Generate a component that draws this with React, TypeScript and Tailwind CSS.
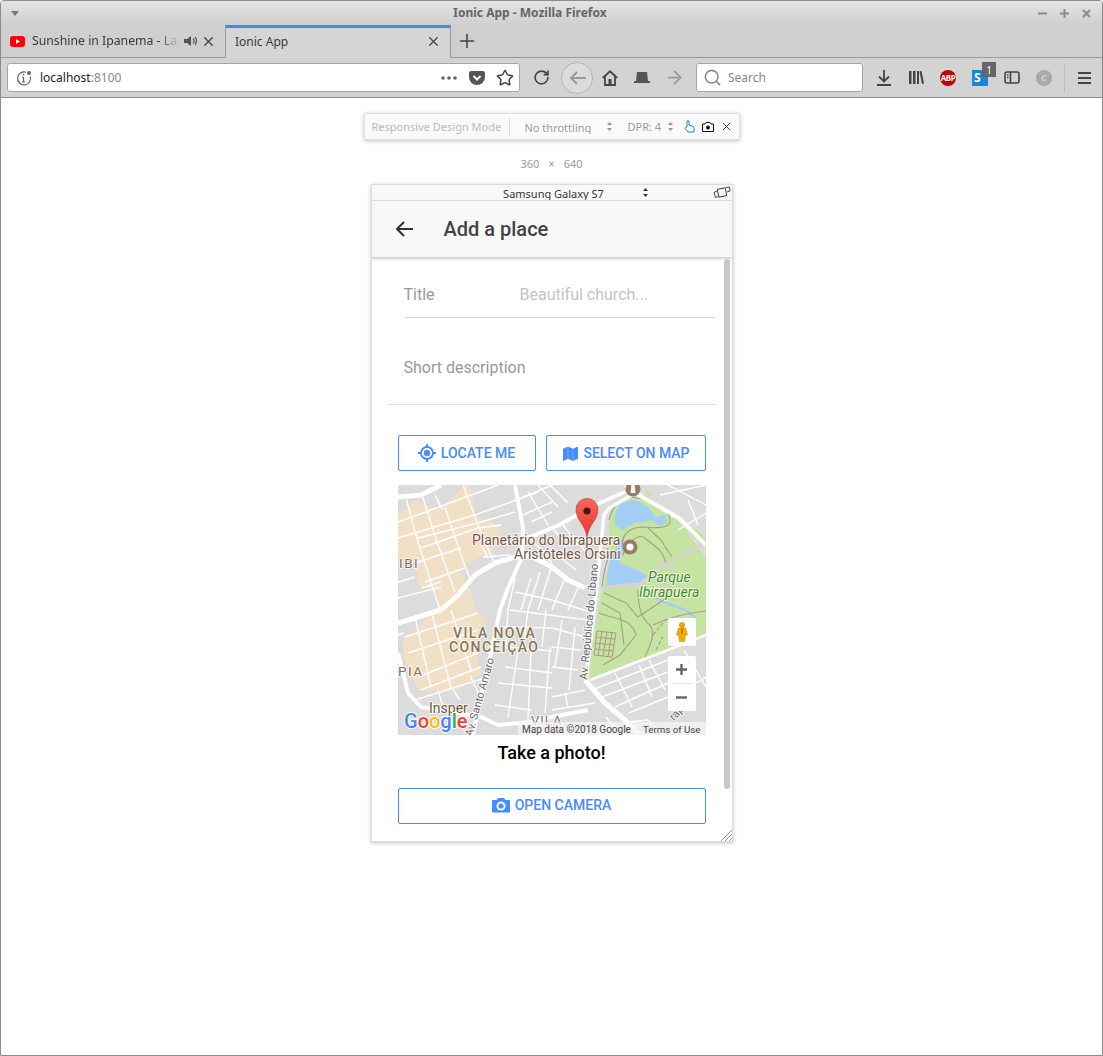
import { ArrowRight, Plus, RotateCw, Search, Star, X } from "lucide-react";

// main roads: points, width
const roads: [string, number][] = [
  ["M0 12 L23 10 L43 0", 5],
  ["M0 138 L33 128 L43 125 L60 110 L77 90 L97 78 L117 72 L135 72 L154 82 L170 95 L187 103", 5],
  ["M117 0 L125 43 L124 72 L110 103 L102 125 L93 168 L80 225 L75 250", 4],
  ["M0 168 L10 208 L23 222 L43 225 L83 232 L100 240 L133 237 L154 232 L190 225", 4],
  ["M187 195 L207 218 L227 235 L241 250", 5],
  ["M234 10 L211 23 L206 30 L199 100 L188 195", 3.5],
  ["M125 55 L161 40 L197 20 L227 7", 4],
  ["M227 0 L244 12 L281 33 L308 60", 4],
  ["M192 195 L270 165 L308 150", 2.5],
];

const grid: [number, number, number, number][] = [
  [8, 13, 20, 57], [20, 57, 42, 125], [25, 13, 40, 60], [40, 60, 57, 107], [47, 23, 63, 70], [63, 70, 73, 97], [65, 0, 80, 40], [80, 40, 97, 80],
  [37, 10, 44, 24], [0, 37, 33, 25], [33, 25, 100, 0], [0, 53, 77, 30], [77, 30, 140, 7], [20, 53, 83, 37], [83, 37, 117, 27], [23, 63, 80, 43], [80, 43, 103, 40],
  [17, 78, 63, 63], [27, 97, 67, 83], [0, 97, 17, 92], [23, 103, 43, 97], [0, 113, 43, 102], [85, 72, 112, 70], [83, 60, 90, 72],
  [123, 13, 154, 0], [125, 30, 154, 17], [133, 37, 154, 27], [130, 7, 150, 40], [140, 0, 160, 22], [152, 0, 170, 18],
  [103, 142, 154, 143], [154, 143, 187, 152], [107, 182, 154, 188], [154, 182, 180, 185], [108, 162, 154, 166], [154, 162, 183, 165], [100, 198, 154, 203], [97, 220, 133, 225], [117, 107, 154, 115], [154, 115, 195, 128], [112, 125, 190, 135],
  [120, 165, 113, 212], [113, 212, 110, 232], [133, 165, 130, 235], [152, 162, 147, 228], [164, 135, 157, 182], [177, 142, 171, 205], [117, 93, 110, 125], [133, 93, 123, 125], [142, 87, 130, 125], [154, 80, 140, 125], [167, 93, 154, 125], [180, 103, 170, 125], [110, 125, 108, 160], [130, 125, 125, 165], [148, 125, 144, 162],
  [7, 152, 80, 128], [10, 168, 80, 145], [20, 192, 80, 168], [23, 205, 83, 182], [17, 132, 33, 202], [33, 125, 53, 203], [53, 125, 73, 185], [20, 214, 84, 194], [55, 205, 62, 215], [72, 190, 82, 212],
  [0, 183, 8, 182], [0, 150, 6, 148], [40, 205, 45, 222],
  [194, 205, 270, 175], [204, 212, 270, 187], [217, 222, 270, 198], [231, 228, 270, 212], [298, 198, 308, 192], [217, 188, 234, 222], [241, 180, 254, 212], [251, 175, 267, 205], [286, 165, 308, 202],
  [154, 212, 187, 205], [167, 208, 170, 222], [154, 225, 197, 218], [230, 237, 250, 235], [250, 235, 265, 250], [208, 232, 222, 250], [280, 45, 308, 28], [262, 10, 308, 0], [270, 0, 308, 20], [290, 15, 300, 40],
  [165, 40, 180, 60], [154, 43, 167, 57], [175, 50, 190, 70], [154, 66, 178, 85], [130, 50, 154, 78],
];

const parkPaths = [
  "M211 35 C214 20 225 10 240 13 C258 16 270 24 272 34 C274 42 262 44 246 42 C232 42 225 48 224 60",
  "M225 70 C228 60 240 46 248 54 C258 62 266 66 268 80",
  "M250 42 C254 50 262 50 266 60 L274 72",
  "M201 128 C218 135 232 132 238 150 L222 170 L205 180",
  "M240 105 C240 125 245 135 252 140 C258 150 252 160 247 172",
  "M206 108 L228 118 L240 132 L258 120 L270 112",
  "M255 140 C272 132 290 128 308 126",
  "M255 150 L268 134 M270 150 L295 142 M258 165 L265 152 M278 145 L290 160",
  "M211 70 C206 84 205 92 204 102",
  "M204 118 L222 128 L226 160",
];

function SortArrows({ className }: { className?: string }) {
  return (
    <svg width="5" height="9" viewBox="0 0 5 9" fill="currentColor" className={className}>
      <path d="M2.5 0L5 3H0ZM0 6H5L2.5 9Z" />
    </svg>
  );
}

function MapCanvas() {
  const font = { fontFamily: "Roboto, sans-serif", paintOrder: "stroke" } as const;
  return (
    <svg viewBox="0 0 308 250" className="block h-[250px] w-[308px]">
      <defs>
        <linearGradient id="pin" x1="0" y1="0" x2="0" y2="1">
          <stop offset="0" stopColor="#f4695f" />
          <stop offset="1" stopColor="#e8352a" />
        </linearGradient>
      </defs>
      <rect width="308" height="250" fill="#dcdcdc" />
      <path d="M0 30 L18 15 L40 25 L60 8 L66 0 L72 0 L78 32 L100 40 L106 55 L92 68 L68 78 L62 88 L72 105 L78 125 L87 135 L77 162 L83 188 L60 205 L20 205 L5 170 L5 155 L33 131 L43 125 L37 105 L20 100 L17 77 L0 72 Z" fill="#f2e0c6" />
      <path d="M211 30 L219 15 L234 12 L244 13 L281 37 L308 73 V150 L192 195 L191 185 L200 125 L204 105 L211 77 Z" fill="#c5e4a1" />
      <path d="M247 3 L254 10 L248 13 Z M284 42 L297 43 L308 53 V63 Z" fill="#c5e4a1" />
      <path d="M217 30 L222 18 L237 15 L251 23 L257 32 L267 30 L269 38 L261 41 L254 35 L237 38 L224 45 L217 40 Z" fill="#a3ccf7" />
      <path d="M226 50 L226 60 L222 78 L241 86 L252 92 L244 97 L216 100 L209 103 L209 90 L213 72 Z" fill="#a3ccf7" />
      <path d="M257 113 L274 120 L287 125 L298 133" stroke="#a3ccf7" strokeWidth="2.5" fill="none" />
      {grid.map(([x1, y1, x2, y2], i) => (
        <line key={i} x1={x1} y1={y1} x2={x2} y2={y2} stroke="#fff" strokeWidth="1.4" />
      ))}
      {parkPaths.map((d, i) => (
        <path key={i} d={d} stroke="#a99c85" strokeWidth="1.1" fill="none" strokeDasharray={i === 7 ? "4 2" : undefined} />
      ))}
      <path d="M199 146 L218 148 L214 172 L196 170 Z M204 146 L200 170 M209 147 L205 171 M214 147 L210 172 M198 152 L217 154 M197 158 L216 160 M197 164 L215 166" stroke="#a89c84" strokeWidth="1" fill="none" />
      <path d="M204 103 L241 100 L264 82 L308 57" stroke="#d3d6c9" strokeWidth="4" fill="none" />
      <path d="M255 70 L272 82 L280 92" stroke="#d3d6c9" strokeWidth="2" fill="none" />
      {roads.map(([d, w], i) => (
        <path key={i} d={d} stroke="#fff" strokeWidth={w} strokeLinejoin="round" fill="none" />
      ))}
      <g stroke="#ffffff" strokeOpacity="0.75" strokeWidth="2">
        <text x="74" y="60" fontSize="14" fill="#75563f" style={font}>Planetário do Ibirapuera</text>
        <text x="116" y="74" fontSize="14" fill="#75563f" style={font}>Aristóteles Orsini</text>
        <text x="250" y="97" fontSize="14" fontStyle="italic" fill="#3f8a1f" style={font}>Parque</text>
        <text x="241" y="112" fontSize="14" fontStyle="italic" fill="#3f8a1f" style={font}>Ibirapuera</text>
        <text x="1" y="83" fontSize="13.5" letterSpacing="1.5" fill="#8a6e50" style={font}>IBI</text>
        <text x="0" y="191" fontSize="13.5" letterSpacing="1.5" fill="#8a6e50" style={font}>PIA</text>
        <text x="55" y="153" fontSize="14" letterSpacing="1.4" fontWeight="500" fill="#8a7450" style={font}>VILA NOVA</text>
        <text x="51" y="167" fontSize="14" letterSpacing="1.4" fontWeight="500" fill="#8a7450" style={font}>CONCEIÇÃO</text>
        <text x="31" y="228" fontSize="14" fill="#75563f" style={font}>Insper</text>
        <text x="133" y="240" fontSize="13" letterSpacing="1" fill="#8a6e50" style={font}>VILA</text>
        <text transform="translate(189 195) rotate(-84.5)" fontSize="11" fill="#666" style={font}>Av. República do Líbano</text>
        <text transform="translate(74 252) rotate(-74)" fontSize="11" fill="#666" style={font}>Av. Santo Amaro</text>
        <text transform="translate(276 236) rotate(-48)" fontSize="11" fill="#666" style={font}>rapa</text>
      </g>
      <circle cx="232" cy="62" r="7.5" fill="#9b7a63" />
      <circle cx="232" cy="62" r="3.6" fill="#fff" />
      <circle cx="235" cy="4" r="7.5" fill="#9b7a63" />
      <path d="M233.5 -1 H236.5 L237.5 8 H232.5 Z" fill="#fff" />
      <path d="M189 52 C187 39 178 35 178 24.5 A11 11 0 0 1 200 24.5 C200 35 191 39 189 52 Z" fill="url(#pin)" stroke="#c8382e" strokeWidth="0.6" />
      <circle cx="189" cy="26" r="3.6" fill="#5c0f0b" />
      <rect x="120" y="237" width="188" height="13" fill="#f5f5f5" fillOpacity="0.75" />
      <text x="124" y="248" fontSize="10" fill="#444" style={{ fontFamily: "Roboto, sans-serif" }}>Map data ©2018 Google</text>
      <text x="245" y="248" fontSize="9.7" fill="#444" style={{ fontFamily: "Roboto, sans-serif" }}>Terms of Use</text>
      <text x="6" y="243" fontSize="20" fontWeight="500" stroke="#fff" strokeWidth="2" style={{ fontFamily: "Roboto, sans-serif", paintOrder: "stroke" }}>
        <tspan fill="#4285f4">G</tspan>
        <tspan fill="#ea4335">o</tspan>
        <tspan fill="#fbbc05">o</tspan>
        <tspan fill="#4285f4">g</tspan>
        <tspan fill="#34a853">l</tspan>
        <tspan fill="#ea4335">e</tspan>
      </text>
    </svg>
  );
}

function OutlineButton({ icon, label, className }: { icon: React.ReactNode; label: string; className: string }) {
  return (
    <button className={`flex h-9 items-center justify-center gap-[5px] rounded-[2px] border border-[#488aff] bg-white text-sm font-medium text-[#488aff] ${className}`}>
      {icon}
      {label}
    </button>
  );
}

function BrowserChrome() {
  return (
    <div className="flex flex-col font-['Noto_Sans',sans-serif]">
      <div className="relative flex h-[24px] items-center justify-center bg-gradient-to-b from-[#e4e4e4] to-[#cfcfcf] pr-[43px] text-xs font-bold text-[#666]">
        <span className="absolute left-[10px] top-[10px] h-0 w-0 border-x-[4px] border-t-[5px] border-x-transparent border-t-[#777]" />
        Ionic App - Mozilla Firefox
        <div className="absolute right-[11px] top-[8px] flex items-center gap-[13px] text-[#8a8a8a]">
          <svg width="9" height="9" viewBox="0 0 9 9"><path d="M0 4.5H9" stroke="currentColor" strokeWidth="2" /></svg>
          <svg width="9" height="9" viewBox="0 0 9 9"><path d="M0 4.5H9M4.5 0V9" stroke="currentColor" strokeWidth="2" /></svg>
          <svg width="9" height="9" viewBox="0 0 9 9"><path d="M1 1L8 8M8 1L1 8" stroke="currentColor" strokeWidth="2" /></svg>
        </div>
      </div>
      <div className="flex h-[33px] bg-[#cfcfcf] text-xs text-[#3a3a3a]">
        <div className="flex w-[224px] items-center border-b border-[#9a9a9a] pl-[9px]">
          <svg width="15" height="11" viewBox="0 0 15 11" className="shrink-0"><rect width="15" height="11" rx="3" fill="#f00" /><path d="M6 3L10 5.5L6 8Z" fill="#fff" /></svg>
          <span className="ml-[7px] w-[148px] shrink-0 overflow-hidden whitespace-nowrap text-[12.25px] [mask-image:linear-gradient(to_right,black_85%,transparent)]">Sunshine in Ipanema - Layla</span>
          <svg width="14" height="12" viewBox="0 0 14 12" className="ml-[4px] shrink-0" fill="#555"><path d="M0 4H3L7 1V11L3 8H0Z" /><path d="M9 3.5C10.5 5 10.5 7 9 8.5M11 2C13 4 13 8 11 10" stroke="#555" fill="none" strokeWidth="1.2" /></svg>
          <X size={15} className="ml-[3px] shrink-0 text-[#444]" />
        </div>
        <div className="flex w-[226px] items-center border-x border-[#9a9a9a] border-t-[3px] border-t-[#3f8ee0] bg-[#d5d5d5] pb-[3px] pl-[9px] pr-[9px]">
          <span className="flex-1">Ionic App</span>
          <X size={15} className="text-[#444]" />
        </div>
        <div className="flex flex-1 items-center border-b border-[#9a9a9a] pl-[5px]">
          <Plus size={22} strokeWidth={1.7} className="text-[#444]" />
        </div>
      </div>
      <div className="flex h-[40px] items-center border-b border-[#8f8f8f] bg-[#d3d3d3] pl-[6px] text-[#444]">
        <div className="flex h-[29px] w-[513px] items-center rounded-[3px] border border-[#a5a5a5] bg-white pl-[8px] pr-[5px] text-xs">
          <svg width="16" height="16" viewBox="0 0 16 16" fill="none" stroke="#666" strokeWidth="1.2"><path d="M10 2.2A6.5 6.5 0 1 0 14.3 6.5" /><path d="M7.5 7V12M6 7H7.5M6 12H9" /><circle cx="7.5" cy="4.6" r="0.8" fill="#666" stroke="none" /><circle cx="13" cy="3" r="2" fill="#666" stroke="none" /></svg>
          <span className="ml-[8px] flex-1 text-[#222]">localhost<span className="text-[#888]">:8100</span></span>
          <svg width="16" height="4" viewBox="0 0 16 4" fill="#666"><circle cx="2" cy="2" r="1.8" /><circle cx="8" cy="2" r="1.8" /><circle cx="14" cy="2" r="1.8" /></svg>
          <svg width="16" height="14" viewBox="0 0 16 14" className="ml-[12px]"><path d="M2 0H14A2 2 0 0 1 16 2V6A8 8 0 0 1 0 6V2A2 2 0 0 1 2 0Z" fill="#555" /><path d="M4.5 5L8 8.5L11.5 5" stroke="#fff" strokeWidth="2" fill="none" /></svg>
          <Star size={18} className="ml-[11px] text-[#444]" strokeWidth={2} />
        </div>
        <RotateCw size={17} strokeWidth={2.4} className="ml-[13px] text-[#444]" />
        <div className="ml-[11px] flex h-[32px] w-[32px] items-center justify-center rounded-full border border-[#b5b5b5] bg-[#dcdcdc]">
          <svg width="17" height="14" viewBox="0 0 17 14" fill="none" stroke="#999" strokeWidth="2"><path d="M17 7H2M8 1L2 7L8 13" /></svg>
        </div>
        <svg width="16" height="16" viewBox="0 0 16 16" className="ml-[9px]" fill="none" stroke="#444" strokeWidth="1.8"><path d="M.8 8L8 1.3L15.2 8" /><path d="M3 6.5V15H13V6.5" /><rect x="6.5" y="9" width="3" height="6" fill="#444" stroke="none" /></svg>
        <svg width="16" height="11" viewBox="0 0 16 11" className="ml-[16px]" fill="#555"><path d="M3 0H13L14 9H16V11H0V9H2Z" /></svg>
        <ArrowRight size={21} className="ml-[14px] text-[#999]" />
        <div className="ml-[11px] flex h-[29px] w-[167px] items-center rounded-[3px] border border-[#a5a5a5] bg-white pl-[6px] text-xs text-[#888]">
          <Search size={19} className="text-[#888]" />
          <span className="ml-[6px]">Search</span>
        </div>
        <svg width="14" height="16" viewBox="0 0 14 16" className="ml-[14px]" fill="none" stroke="#444" strokeWidth="1.8"><path d="M7 0V11M2 6.5L7 11.5L12 6.5" /><path d="M0 15H14" /></svg>
        <svg width="15" height="15" viewBox="0 0 15 15" className="ml-[18px]" fill="#444"><path d="M0 1H2.5V14H0ZM4 1H6.5V14H4ZM8 1H10V14H8ZM10.5 1.5L12.5 1L15 13.5L13 14Z" /></svg>
        <div className="ml-[16px] flex h-[16px] w-[16px] items-center justify-center rounded-full bg-[#c00000] text-[8px] font-bold leading-none tracking-[-0.5px] text-white">ABP</div>
        <div className="relative ml-[16px] mt-[1px] flex h-[16px] w-[16px] items-center justify-start bg-[#1a86d8] pl-[2px] text-[12px] font-bold leading-none text-white">
          S
          <span className="absolute left-[10px] top-[-8px] flex h-[15px] w-[14px] items-center justify-center bg-[#666] text-[10px] font-normal">1</span>
        </div>
        <svg width="16" height="13" viewBox="0 0 16 13" className="ml-[16px]" fill="none" stroke="#444" strokeWidth="1.6"><rect x="1" y="1" width="14" height="11" rx="2" /><path d="M6.5 1V12M3 4H4.5M3 6.5H4.5" /></svg>
        <div className="ml-[16px] flex h-[16px] w-[16px] items-center justify-center rounded-full bg-[#aaa] text-[9px] font-bold text-[#d3d3d3]">C</div>
        <div className="ml-[12px] h-[30px] w-px bg-[#bdbdbd]" />
        <svg width="13" height="12" viewBox="0 0 13 12" className="ml-[13px]" fill="#444"><path d="M0 0H13V2H0ZM0 5H13V7H0ZM0 10H13V12H0Z" /></svg>
      </div>
    </div>
  );
}

function DeviceToolbar() {
  return (
    <div className="flex h-[27px] w-[376px] items-center rounded-[2px] border border-[#e0e0e0] bg-[#fafafa] pl-[7px] font-['Noto_Sans',sans-serif] text-[11px] shadow-[0_1px_4px_rgba(0,0,0,0.25)]">
      <span className="mt-[2px] w-[137px] whitespace-nowrap text-[#bdb9bd]">Responsive Design Mode</span>
      <span className="h-[18px] w-px bg-[#ddd]" />
      <span className="ml-[15px] mt-[1px] h-[13px] w-[82px] overflow-hidden leading-[14px] text-[#9a9a9a]">No throttling</span>
      <SortArrows className="text-[#999]" />
      <span className="ml-[16px] mt-[2px] w-[40px] text-[#9a9a9a]">DPR: 4</span>
      <SortArrows className="text-[#999]" />
      <svg width="11" height="13" viewBox="0 0 11 13" className="ml-[11px]" fill="none" stroke="#2a78e0" strokeWidth="1"><path d="M3 7V1.5A1 1 0 0 1 5 1.5V5L9 6.5C10.5 7 10 9 10 12H4L1 8.5C1 7.5 2 7 3 7Z" /></svg>
      <svg width="12" height="10" viewBox="0 0 12 10" className="ml-[7px]" fill="none" stroke="#111" strokeWidth="1"><path d="M.5 2H3L4 .5H8L9 2H11.5V9.5H.5Z" /><circle cx="6" cy="5.5" r="1.6" fill="#111" /></svg>
      <X size={13} strokeWidth={1.5} className="ml-[6px] text-[#111]" />
    </div>
  );
}

function DeviceFrame() {
  return (
    <div className="relative flex h-[658px] w-[362px] flex-col overflow-hidden border border-[#dcdcdc] bg-white shadow-[0_1px_4px_rgba(0,0,0,0.25)]">
      <div className="relative flex h-[16px] shrink-0 items-center justify-center border-b border-[#dcdcdc] bg-[#f8f8f8] font-['Noto_Sans',sans-serif] text-[11px] text-[#333]">
        <span className="ml-[4px] mt-[1px] h-[14px] overflow-hidden leading-[15px]">Samsung Galaxy S7</span>
        <SortArrows className="absolute left-[271px] top-[3px] text-[#333]" />
        <svg width="18" height="13" viewBox="0 0 18 13" className="absolute right-[1px] top-[1px]" fill="none" stroke="#333" strokeWidth="0.9"><rect x="5" y="2.5" width="8" height="8" transform="rotate(-12 9 6.5)" /><path d="M4 5L1 6.5L2.5 11.5L5 10.5M13 1.5L16.5 1L17 5L14 6" /></svg>
      </div>
      <header className="flex h-[57px] shrink-0 items-center border-b border-[#d4d4d4] bg-[#f8f8f8] pl-[23px] shadow-[0_1px_3px_rgba(0,0,0,0.2)]">
        <svg width="18" height="16" viewBox="0 0 18 16" fill="none" stroke="#333" strokeWidth="2"><path d="M18 8H2M9 1L2 8L9 15" /></svg>
        <h1 className="ml-[31px] text-xl font-medium text-[#424242]">Add a place</h1>
      </header>
      <div className="flex flex-1 flex-col">
        <div className="ml-[32px] mr-[16px] mt-[17px] flex h-[43px] items-center border-b border-[#dedede] pb-[3px] text-base">
          <label className="w-[116px] text-[#999]">Title</label>
          <span className="text-[#c4c4c4]">Beautiful church...</span>
        </div>
        <div className="ml-[16px] mr-[16px] flex h-[87px] items-center border-b border-[#dedede] pl-[16px] pt-[14px] text-base text-[#999]">Short description</div>
        <div className="ml-[26px] mt-[30px] flex gap-[10px]">
          <OutlineButton
            className="w-[138px]"
            label="LOCATE ME"
            icon={
              <svg width="18" height="18" viewBox="0 0 18 18" fill="none" stroke="#488aff" strokeWidth="1.8"><circle cx="9" cy="9" r="6" /><circle cx="9" cy="9" r="3.2" fill="#488aff" stroke="none" /><path d="M9 0V3M9 15V18M0 9H3M15 9H18" /></svg>
            }
          />
          <OutlineButton
            className="w-[160px] pl-[2px]"
            label="SELECT ON MAP"
            icon={
              <svg width="15" height="15" viewBox="0 0 15 14" preserveAspectRatio="none" fill="#488aff"><path d="M0 2.5L5 .5L10 2.5L15 .5V12L10 14L5 12L0 14Z" /><path d="M5 1V12M10 2.5V13.5" stroke="#fff" strokeOpacity="0.35" strokeWidth="0.8" /></svg>
            }
          />
        </div>
        <div className="ml-[26px] mt-[14px] w-[308px]">
          <div className="relative h-[250px] w-[308px] overflow-hidden">
            <MapCanvas />
            <div className="absolute left-[270px] top-[133px] flex h-[28px] w-[28px] items-center justify-center rounded-[2px] bg-white">
              <svg width="12" height="20" viewBox="0 0 12 20" fill="#f4ab00" stroke="#c98d00" strokeWidth="0.6"><circle cx="6" cy="3" r="2.6" /><path d="M2.5 6H9.5L11.5 13H9.5L8.5 19.5H3.5L2.5 13H.5Z" /><path d="M6 7V12" stroke="#e0641a" strokeWidth="2" /></svg>
            </div>
            <div className="absolute left-[270px] top-[171px] flex h-[55px] w-[28px] flex-col items-center rounded-[2px] bg-white text-[#666]">
              <span className="flex h-[27px] items-center"><svg width="11" height="11" viewBox="0 0 11 11"><path d="M0 5.5H11M5.5 0V11" stroke="currentColor" strokeWidth="2.4" /></svg></span>
              <span className="h-px w-[20px] bg-[#e6e6e6]" />
              <span className="flex h-[27px] items-center"><svg width="11" height="11" viewBox="0 0 11 11"><path d="M0 5.5H11" stroke="currentColor" strokeWidth="2.4" /></svg></span>
            </div>
          </div>
          <p className="mt-[6px] text-center text-lg/[24px] font-medium text-black">Take a photo!</p>
          <OutlineButton
            className="mt-[23px] w-[308px] pb-[2px]"
            label="OPEN CAMERA"
            icon={
              <svg width="18" height="16" viewBox="0 0 18 16"><path d="M6 1H12L13.5 3H17A1 1 0 0 1 18 4V14.5A1 1 0 0 1 17 15.5H1A1 1 0 0 1 0 14.5V4A1 1 0 0 1 1 3H4.5Z" fill="#488aff" /><circle cx="9" cy="9" r="4.5" fill="#fff" /><circle cx="9" cy="9" r="2.6" fill="#488aff" /></svg>
            }
          />
        </div>
      </div>
      <span className="absolute right-[2px] top-[74px] h-[530px] w-[6px] rounded-[3px] bg-[#c8c8c8]" />
      <svg width="12" height="12" viewBox="0 0 12 12" className="absolute bottom-0 right-0" stroke="#9a9a9a" strokeWidth="1"><path d="M1 12L12 1M5 12L12 5M9 12L12 9" /></svg>
    </div>
  );
}

export default function App() {
  return (
    <div className="flex h-[1056px] w-[1103px] flex-col overflow-hidden rounded-t-[4px] border border-[#8c8c8c] bg-white font-['Roboto',sans-serif]">
      <BrowserChrome />
      <main className="flex flex-1 flex-col items-center pt-[15px]">
        <DeviceToolbar />
        <p className="mt-[17px] flex h-[14px] items-center gap-[9px] font-['Noto_Sans',sans-serif] text-[11px] text-[#9a9a9a]">
          <span>360</span><span>×</span><span>640</span>
        </p>
        <div className="mt-[13px]">
          <DeviceFrame />
        </div>
      </main>
    </div>
  );
}
